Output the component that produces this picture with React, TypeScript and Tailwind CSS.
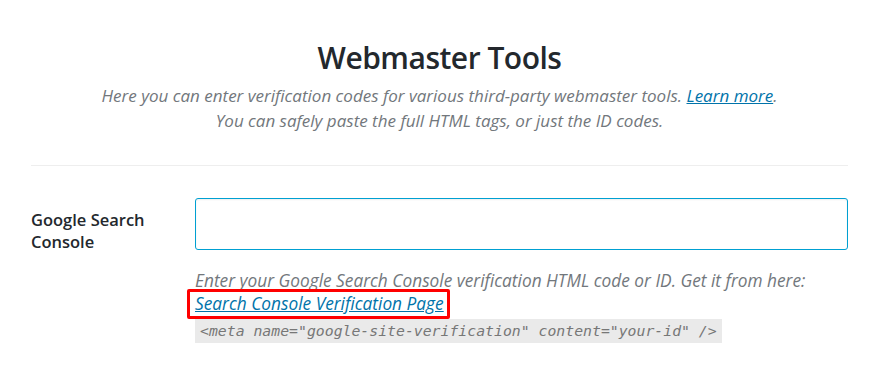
import React from "react";

export default function App() {
  return (
    <div className="w-[880px] h-[369px] bg-white overflow-hidden" style={{ fontFamily: '"Open Sans", "Noto Sans", sans-serif' }}>
      <div className="pl-[31px] pr-[32px]">
        <div className="pt-[38px] flex flex-col items-center">
          <h1 className="text-[30px] leading-[40px] font-semibold text-[#23282d] tracking-[-0.5px]">Webmaster Tools</h1>
          <p className="mt-[5px] text-[17px] leading-[25px] italic text-[#72777c] text-center">
            Here you can enter verification codes for various third-party webmaster tools.{" "}
            <a className="text-[#0073aa] underline">Learn more</a>.
            <br />
            You can safely paste the full HTML tags, or just the ID codes.
          </p>
        </div>
        <div className="mt-[32px] h-px bg-[#eeeeee]" />
        <div className="mt-[32px] flex">
          <div className="w-[164px] pt-[11px] text-[16.5px] leading-[22px] font-semibold text-[#23282d]">
            Google Search
            <br />
            Console
          </div>
          <div className="flex-1">
            <div className="h-[52px] rounded-[3px] border border-[#00a0d2] shadow-[inset_0_1px_2px_rgba(0,0,0,0.07)] bg-white" />
            <p className="mt-[19px] text-[17.3px] leading-[23px] italic text-[#72777c] whitespace-nowrap">
              Enter your Google Search Console verification HTML code or ID. Get it from here:
            </p>
            <div className="relative inline-block">
              <a className="text-[17.3px] leading-[23px] italic text-[#0073aa] underline">Search Console Verification Page</a>
              <div className="absolute left-[-8px] right-[-6px] top-[-3px] bottom-[-3px] border-[3px] border-[#ff0000] rounded-[2px]" />
            </div>
            <div className="mt-[2px]">
              <code className="inline-block bg-[#eaeaea] px-[5px] h-[24px] leading-[24px] text-[14.8px] italic text-[#777777]" style={{ fontFamily: '"DejaVu Sans Mono", monospace' }}>
                {'<meta name="google-site-verification" content="your-id" />'}
              </code>
            </div>
          </div>
        </div>
      </div>
    </div>
  );
}
